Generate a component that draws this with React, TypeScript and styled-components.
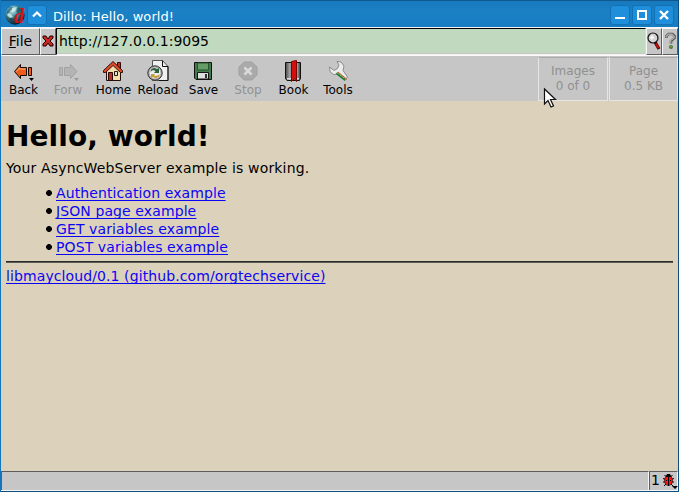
import React from 'react';
import styled, { createGlobalStyle } from 'styled-components';

const Global = createGlobalStyle`
  * { box-sizing: border-box; }
  body { margin: 0; overflow: hidden; font-family: "DejaVu Sans", sans-serif; color: #000; }
  svg { display: block; flex: none; overflow: visible; }
`;

const Window = styled.div`
  position: relative;
  width: 679px;
  height: 492px;
  display: flex;
  flex-direction: column;
  background: #c6c6c6;
  border: solid;
  border-width: 0 1px 1px;
  border-color: #0d4e7f #0d4e7f #0d4e7f #1176bd;
`;

const TitleBar = styled.header`
  height: 27px;
  flex: none;
  display: flex;
  align-items: center;
  gap: 2px;
  padding: 2px 4px 0 3px;
  border-top: 1px solid #12588f;
  background: linear-gradient(#1779be, #1b81c5 45%, #177bc0);
`;

const Logo = styled.div`
  position: relative;
  width: 21px;
  height: 22px;
`;

const LogoLetter = styled.span`
  position: absolute;
  left: 10px;
  top: 2px;
  font: italic bold 20px/20px "Liberation Serif", serif;
  color: #d3141c;
`;

const TitleButton = styled.div`
  width: 20px;
  height: 20px;
  border: 1px solid #1270b5;
  border-radius: 3px;
  background: #208fdb;
  display: grid;
  place-items: center;
`;

const Title = styled.div`
  flex: 1;
  padding: 3px 0 0 4px;
  font-size: 13px;
  letter-spacing: 0.08px;
  line-height: 18px;
  color: #fff;
  white-space: nowrap;
`;

const LocationBar = styled.div`
  height: 28px;
  flex: none;
  display: flex;
  border-top: 1px solid #f5f5f5;
`;

const MenuButton = styled.div<{ $w: number }>`
  width: ${p => p.$w}px;
  height: 27px;
  display: flex;
  align-items: center;
  justify-content: center;
  padding-bottom: 1px;
  font-size: 14px;
  background: #c6c6c6;
  border: 1px solid;
  border-color: #f5f5f5 #5d5d5d #5d5d5d #f5f5f5;
`;

const UrlField = styled.div`
  flex: 1;
  height: 27px;
  padding-left: 2px;
  border: 1px solid;
  border-color: #000 #d8d8d8 #f5f5f5 #000;
  box-shadow: inset 0 -1px #c6c6c6;
  background: #c1dabf;
  font-size: 14px;
  line-height: 25px;
`;

const Toolbar = styled.nav`
  height: 46px;
  flex: none;
  display: flex;
  border-top: 1px solid #fafafa;
`;

const ToolLabel = styled.span``;

const Tool = styled.div<{ $w: number; $off?: boolean }>`
  width: ${p => p.$w}px;
  padding-top: 4px;
  display: flex;
  flex-direction: column;
  align-items: center;
  font-size: 12px;
  line-height: 16px;
  color: ${p => (p.$off ? '#929292' : '#000')};
  &:nth-child(odd) ${ToolLabel} { padding-left: 1px; }
`;

const Stat = styled.div<{ $w: number }>`
  width: ${p => p.$w}px;
  height: 44px;
  margin: 1px 0 0 1px;
  padding-top: 6px;
  border: 1px solid;
  border-color: #aaa #e5e5e5 #e5e5e5 #e5e5e5;
  color: #909090;
  font-size: 12px;
  line-height: 15px;
  text-align: center;
`;

const Spacer = styled.div`
  flex: 1;
`;

const Page = styled.main`
  flex: 1;
  background: #dcd1ba;
  padding: 18px 5px 0;
  font-size: 14px;
  line-height: 18px;
`;

const Heading = styled.h1`
  margin: 0;
  font-size: 28px;
  letter-spacing: 0.08px;
  line-height: 36px;
`;

const Intro = styled.p`
  margin: 4px 0 7px;
  letter-spacing: 0.155px;
`;

const List = styled.ul`
  margin: 0;
  padding: 0 0 0 39px;
  list-style: none;
`;

const Item = styled.li`
  height: 18px;
  display: flex;
  align-items: center;
`;

const Link = styled.a`
  color: #0c04f4;
  letter-spacing: 0.1px;
  text-decoration: underline;
  text-decoration-thickness: 1px;
  text-underline-offset: 2px;
  text-decoration-skip-ink: none;
`;

const Rule = styled.hr`
  height: 2px;
  margin: 5px 0 4px;
  border: 0;
  border-top: 1px solid #2c2c2c;
  border-bottom: 1px solid #5d5b55;
`;

const StatusBar = styled.footer`
  height: 20px;
  flex: none;
  display: flex;
  border-bottom: 1px solid #f5f5f5;
`;

const StatusText = styled.div`
  flex: 1;
  border: solid;
  border-width: 1px 1px 0 1px;
  border-color: #5d5d5d #f5f5f5 #f5f5f5 #5d5d5d;
`;

const Bugs = styled.div`
  width: 29px;
  display: flex;
  gap: 3px;
  padding-left: 1px;
  border: solid;
  border-width: 1px 1px 0 1px;
  border-color: #5d5d5d #f5f5f5 #f5f5f5 #5d5d5d;
  font-size: 14px;
  line-height: 17px;
`;

const Pointer = styled.svg`
  position: absolute;
  left: 541px;
  top: 87px;
`;

const Globe = () => (
  <svg width="21" height="22" viewBox="0 0 21 22">
    <defs>
      <radialGradient id="globe" cx="35%" cy="25%" r="75%">
        <stop offset="0" stopColor="#d5f1f5" />
        <stop offset=".4" stopColor="#4a94a6" />
        <stop offset="1" stopColor="#071f2a" />
      </radialGradient>
    </defs>
    <circle cx="11" cy="11" r="9.7" fill="url(#globe)" />
    <path d="M3 7l3-4 3 0-1 3-2 1-1 3-2 1zM14 3l3 3-2 3-3-1zM6 13l4 2-1 4-4-4z" fill="#0b3b49" opacity=".5" />
    <path d="M8 4l5-1-2 4-3 1zM4 9l3 1 2 3-3 1-3-3z" fill="#d5f1f3" opacity=".8" />
  </svg>
);

const RedCross = () => (
  <svg width="12" height="12" viewBox="0 0 12 12">
    <path d="M1 1h3l2 3 2-3h3v2L8 6l3 3v2H8L6 8l-2 3H1V9l3-3-3-3z" fill="#c9261e" stroke="#240000" />
  </svg>
);

const Magnifier = () => (
  <svg width="14" height="20" viewBox="0 0 14 20">
    <path d="M8 11l4 7" stroke="#3a0000" strokeWidth="3.200" />
    <path d="M9 12.500l2.600 4.800" stroke="#c4100c" strokeWidth="2" />
    <circle cx="6" cy="7" r="5" fill="#d4d4d4" stroke="#111" strokeWidth="1.200" />
    <path d="M3 6.500h4M5 4.500v4" stroke="#fff" strokeWidth="1.300" />
  </svg>
);

const Help = () => (
  <svg width="13" height="20" viewBox="0 0 13 20">
    <path d="M2.500 7V5l2-2h4l2 2v2L7 10v2.500" fill="none" stroke="#555" strokeWidth="2.600" />
    <path d="M2.500 6.500V5l2-1.700h3.500l2 2v1.500L6.500 9.500v2.500" fill="none" stroke="#aaa" strokeWidth="1.500" />
    <circle cx="7" cy="16" r="2" fill="#477c35" />
    <rect x="6.500" y="15" width="1.500" height="1.500" fill="#a98634" />
  </svg>
);

const Arrow = ({ off }: { off?: boolean }) => (
  <svg width="22" height="22" viewBox="0 0 22 22">
    {off ? (
      <g fill="#b4b4b4" stroke="#a2a2a2">
        <path d="M7.500 7.500h6v-3l6.500 7-6.500 7v-3h-6zM2.500 7.500h3v8h-3z" />
        <path d="M17 18h5l-2.500 3z" fill="#999" stroke="none" />
      </g>
    ) : (
      <g>
        <path d="M2.500 11.500l6-7v3h6v8h-6v3zM16.500 7.500h3v8h-3z" fill="#ee5c1c" stroke="#160800" />
        <path d="M4.500 11.500L7.500 8v1h6" fill="none" stroke="#ffad74" />
        <path d="M17 18h5l-2.500 3z" />
      </g>
    )}
  </svg>
);

const Home = () => (
  <svg width="22" height="22" viewBox="0 0 22 22">
    <path d="M4.500 10v10.500h14V10l-7-7z" fill="#f3dfae" stroke="#211008" />
    <path d="M15.500 2.500h3v6l-3-3z" fill="#c42d1b" stroke="#2b0906" />
    <path d="M1.500 10.500l9.500-9 9.500 9v2h-2L11 5.500l-7.500 7h-2z" fill="#df4b29" stroke="#35110a" />
    <path d="M6.500 12.500h4v8h-4z" fill="#b62f20" stroke="#260804" />
    <path d="M12.500 11.500h3v4h-3z" fill="#d9e3dd" stroke="#26170b" />
  </svg>
);

const Reload = () => (
  <svg width="22" height="22" viewBox="0 0 22 22">
    <path d="M5.500 .500h10l5.500 6v14h-15.500z" fill="#efefef" stroke="#555" />
    <path d="M15.500 .500v6h5.500v14H12" fill="none" stroke="#111" />
    <circle cx="8" cy="13" r="7.200" fill="#a9a9a9" stroke="#333" />
    <circle cx="8" cy="13" r="5.500" fill="#ededeb" />
    <path d="M3.500 12c0-4 4-5 6.500-3l2-1v5H7l1.500-2C7 10 5 10 3.500 12z" fill="#316340" />
    <path d="M12.500 14c0 4-4 5-6.500 3l-2 1v-4h4l-1 1.500c2 1 3.500.5 5.500-1.500z" fill="#c49c39" />
  </svg>
);

const Save = () => (
  <svg width="22" height="22" viewBox="0 0 22 22">
    <path d="M2.500 2.500h17v17H4l-1.500-1.500z" fill="#427b49" stroke="#111" />
    <path d="M5.500 3h11v7h-11z" fill="#659c67" stroke="#2a5131" />
    <path d="M5.500 12.500h11v6.500h-11z" fill="#dedede" stroke="#151515" />
    <path d="M13 14h2v4h-2z" fill="#283430" />
  </svg>
);

const Stop = () => (
  <svg width="22" height="22" viewBox="0 0 22 22">
    <path d="M7 2h8l5 5v8l-5 5H7l-5-5V7z" fill="#aaa" stroke="#a1a1a1" />
    <path d="M7.500 7.500l7 7m0-7l-7 7" stroke="#d9d9d9" strokeWidth="2.500" />
  </svg>
);

const Book = () => (
  <svg width="22" height="22" viewBox="0 0 22 22">
    <defs>
      <linearGradient id="bookCover">
        <stop stopColor="#444" /><stop offset=".3" stopColor="#aaa" /><stop offset=".5" stopColor="#333" />
        <stop offset=".8" stopColor="#999" /><stop offset="1" stopColor="#333" />
      </linearGradient>
    </defs>
    <path d="M4 2.500h14.500v16l-1 2H5l-1.500-2v-16z" fill="url(#bookCover)" stroke="#111" />
    <path d="M5 18h12v1.500H5z" fill="#ddd" />
    <path d="M9.500 1.500l5-1v21l-2-3-3 3z" fill="#d4100d" stroke="#760400" />
  </svg>
);

const Tools = () => (
  <svg width="22" height="22" viewBox="0 0 22 22">
    <path d="M10 1.500l4 .500 3 4-1 4.500 4.500 6.500-2.500 3-7.500-6-4 .500-3.500-3-.500-4.500 4.500 3.500 3.500-2 1.500-3.500z" fill="#ececec" stroke="#777" strokeWidth=".8" />
    <path d="M9.500 13l9 7" stroke="#287c30" strokeWidth="2.400" />
    <path d="M11 12l9 7.500" stroke="#c44f30" strokeWidth="1" />
    <path d="M10 12.500l9 7" stroke="#f1e8a0" strokeWidth=".8" strokeDasharray="1 1" />
  </svg>
);

const Ladybug = () => (
  <svg width="16" height="18" viewBox="0 0 16 18">
    <path d="M1.500 3l2 2M9.500 3l-2 2M0 6.500l3 1M11 6.500l-3 1M0 10h3m5 0h3M1 14l2-2m7 2-2-2" stroke="#000" />
    <ellipse cx="5.500" cy="8.500" rx="4" ry="5" fill="#ff1515" stroke="#300" strokeWidth=".7" />
    <path d="M2.500 5l1.500-3h3l1.500 3zM5 5h1v9H5zM3 8h1v1H3zM7 8h1v1H7z" />
    <path d="M9 14h6l-3 3z" />
  </svg>
);

const tools = [
  { label: 'Back', icon: <Arrow />, w: 44 },
  { label: 'Forw', icon: <Arrow off />, w: 46, off: true },
  { label: 'Home', icon: <Home />, w: 44 },
  { label: 'Reload', icon: <Reload />, w: 46 },
  { label: 'Save', icon: <Save />, w: 44 },
  { label: 'Stop', icon: <Stop />, w: 46, off: true },
  { label: 'Book', icon: <Book />, w: 44 },
  { label: 'Tools', icon: <Tools />, w: 46 },
];

const links = ['Authentication example', 'JSON page example', 'GET variables example', 'POST variables example'];

export default function App() {
  return (
    <>
      <Global />
      <Window>
        <TitleBar>
          <Logo><Globe /><LogoLetter>d</LogoLetter></Logo>
          <TitleButton>
            <svg width="12" height="12" viewBox="0 0 12 12"><path d="M2 7.500l4-4 4 4" fill="none" stroke="#fff" strokeWidth="2.200" /></svg>
          </TitleButton>
          <Title>Dillo: Hello, world!</Title>
          <TitleButton>
            <svg width="12" height="12"><path d="M1 9h10" stroke="#fff" strokeWidth="2" /></svg>
          </TitleButton>
          <TitleButton>
            <svg width="12" height="12"><path d="M2 2h8v8H2z" fill="none" stroke="#fff" strokeWidth="2" /></svg>
          </TitleButton>
          <TitleButton>
            <svg width="12" height="12"><path d="M2 2l8 8m0-8l-8 8" stroke="#fff" strokeWidth="2.400" /></svg>
          </TitleButton>
        </TitleBar>
        <LocationBar>
          <MenuButton $w={39}><span><u>F</u>ile</span></MenuButton>
          <MenuButton $w={16}><RedCross /></MenuButton>
          <UrlField>http://127.0.0.1:9095</UrlField>
          <MenuButton $w={16}><Magnifier /></MenuButton>
          <MenuButton $w={16}><Help /></MenuButton>
        </LocationBar>
        <Toolbar>
          {tools.map(t => (
            <Tool key={t.label} $w={t.w} $off={t.off}>
              {t.icon}
              <ToolLabel>{t.label}</ToolLabel>
            </Tool>
          ))}
          <Spacer />
          <Stat $w={70}>Images<br />0 of 0</Stat>
          <Stat $w={69}>Page<br />0.5 KB</Stat>
        </Toolbar>
        <Page>
          <Heading>Hello, world!</Heading>
          <Intro>Your AsyncWebServer example is working.</Intro>
          <List>
            {links.map(l => (
              <Item key={l}>
                <svg width="11" height="8"><path d="M3 1h2l2 2v2L5 7H3L1 5V3z" /></svg>
                <Link>{l}</Link>
              </Item>
            ))}
          </List>
          <Rule />
          <Link>libmaycloud/0.1 (github.com/orgtechservice)</Link>
        </Page>
        <StatusBar>
          <StatusText />
          <Bugs>1<Ladybug /></Bugs>
        </StatusBar>
        <Pointer width="15" height="22" viewBox="0 0 15 22">
          <path d="M2.500 2v15l3.500-3.500 3 6.500 2.500-1-3-6.500h5z" fill="#fff" stroke="#111" strokeWidth="1.200" />
        </Pointer>
      </Window>
    </>
  );
}
